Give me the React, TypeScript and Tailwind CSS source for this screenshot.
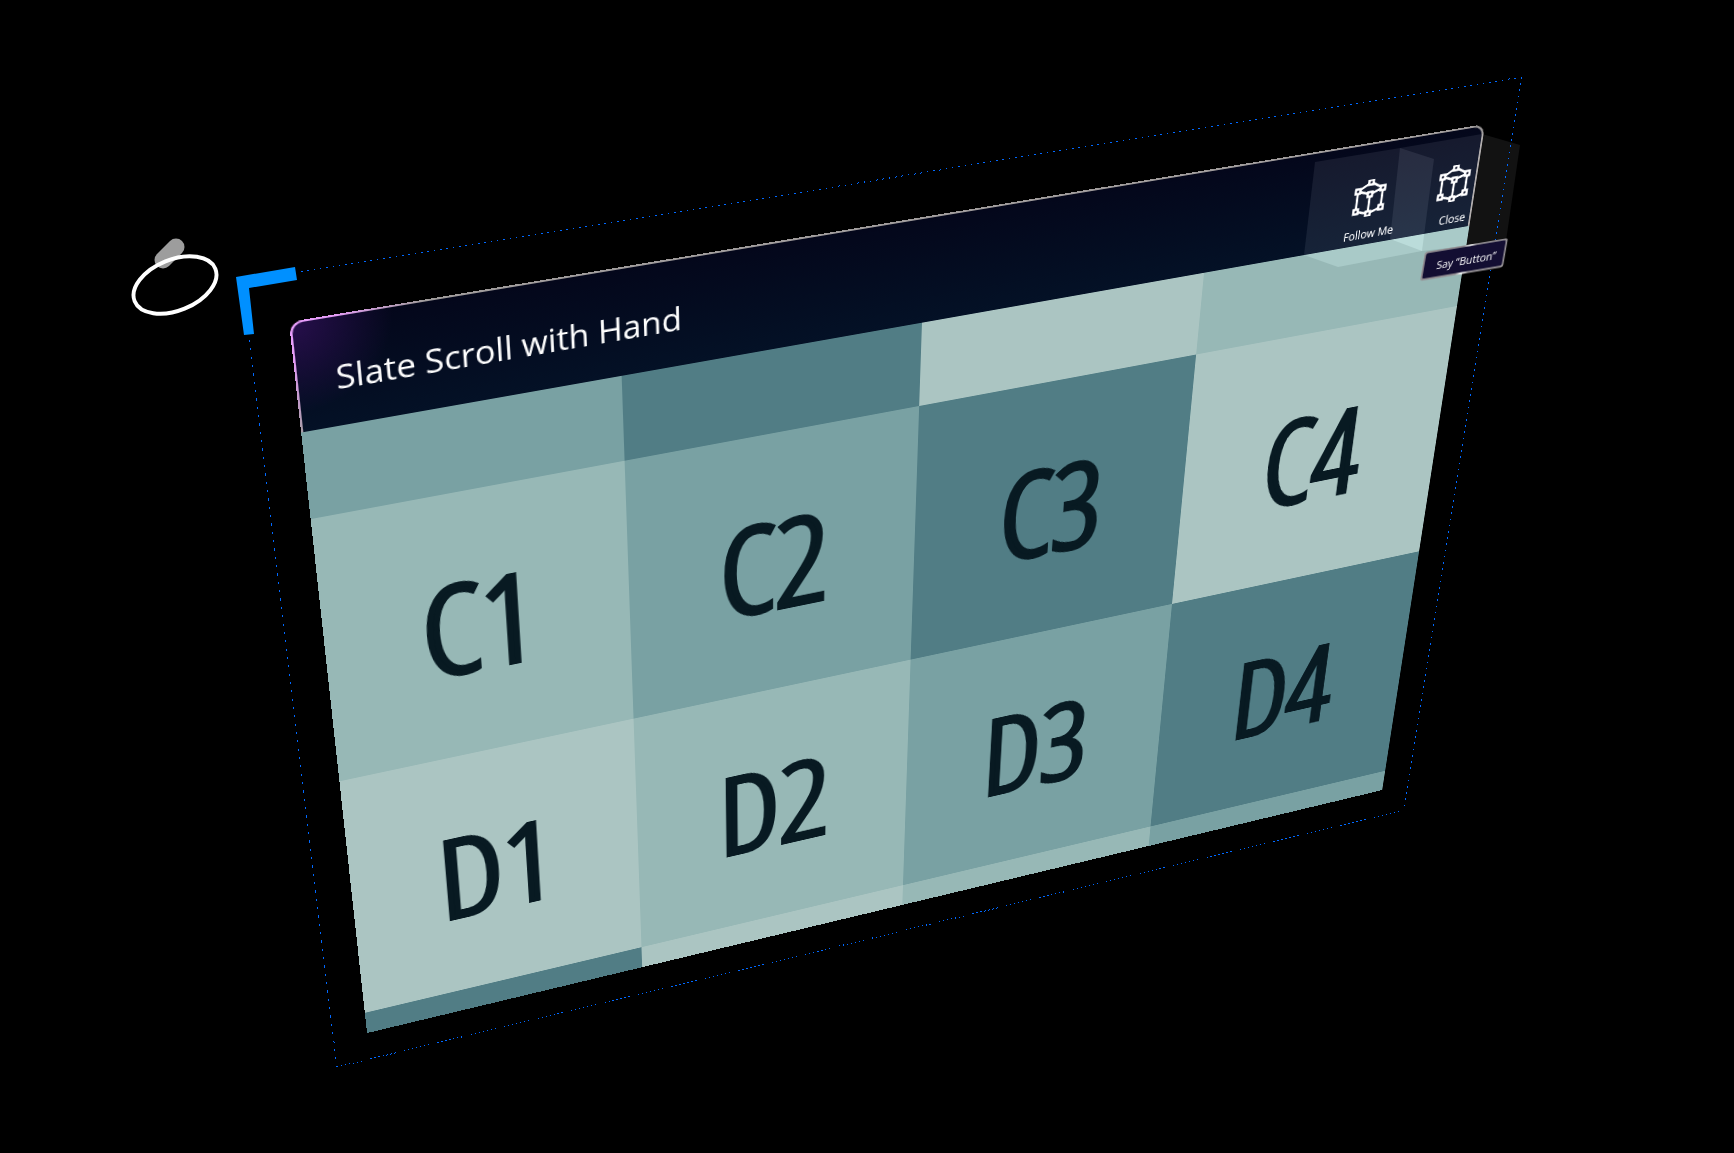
import { useEffect, useState, type ReactNode } from "react";

type Point = [number, number];
type Quad = [Point, Point, Point, Point];

const SCENE_WIDTH = 1734;

/* Corners run clockwise from the top left, in scene units. */
const SLATE: Quad = [[289, 322], [1485, 124], [1382, 790], [367, 1033]];
const TOOLTIP: Quad = [[1425, 252], [1508, 238], [1503, 267], [1420, 281]];

/* Projective transform that carries a w × h box onto a quad. */
function project(quad: Quad, w: number, h: number, scale: number) {
  const [p0, p1, p2, p3] = quad.map(([x, y]) => [x * scale, y * scale]);
  const dx1 = p1[0] - p2[0];
  const dx2 = p3[0] - p2[0];
  const sx = p0[0] - p1[0] + p2[0] - p3[0];
  const dy1 = p1[1] - p2[1];
  const dy2 = p3[1] - p2[1];
  const sy = p0[1] - p1[1] + p2[1] - p3[1];
  const den = dx1 * dy2 - dx2 * dy1;
  const g = (sx * dy2 - dx2 * sy) / den;
  const k = (dx1 * sy - sx * dy1) / den;
  const a = p1[0] - p0[0] + g * p1[0];
  const b = p3[0] - p0[0] + k * p3[0];
  const d = p1[1] - p0[1] + g * p1[1];
  const e = p3[1] - p0[1] + k * p3[1];
  return `matrix3d(${a / w},${d / w},0,${g / w},${b / h},${e / h},0,${k / h},0,0,1,0,${p0[0]},${p0[1]},0,1)`;
}

function useSceneScale() {
  const [scale, setScale] = useState(window.innerWidth / SCENE_WIDTH);
  useEffect(() => {
    const onResize = () => setScale(window.innerWidth / SCENE_WIDTH);
    window.addEventListener("resize", onResize);
    return () => window.removeEventListener("resize", onResize);
  }, []);
  return scale;
}

const LIGHT = "bg-[#abc5c2]";
const SOFT = "bg-[#97b8b6]";
const MID = "bg-[#79a1a3]";
const DARK = "bg-[#517d85]";

/* Visible part of the scrolled map: rows B (cut off), C, D and E (cut off). */
const CELLS: { tone: string; label?: string }[] = [
  { tone: MID }, { tone: DARK }, { tone: LIGHT }, { tone: SOFT },
  { tone: SOFT, label: "C1" }, { tone: MID, label: "C2" }, { tone: DARK, label: "C3" }, { tone: LIGHT, label: "C4" },
  { tone: LIGHT, label: "D1" }, { tone: SOFT, label: "D2" }, { tone: MID, label: "D3" }, { tone: DARK, label: "D4" },
  { tone: DARK }, { tone: LIGHT }, { tone: SOFT }, { tone: MID },
];

const NODES: Point[] = [[0, -17], [-14, -9], [14, -9], [0, -4], [-14, 13], [14, 12], [0, 17]];

function BoundsIcon() {
  return (
    <svg viewBox="-20 -20 40 40" className="size-10" fill="none" stroke="#fff" strokeWidth="2.4" aria-hidden="true">
      <path d="M0-17L-14-9V13L0 17L14 12V-9ZM-14-9L0-4L14-9M0-4V17" />
      {NODES.map(([x, y]) => (
        <rect key={`${x},${y}`} x={x - 2.5} y={y - 2.5} width="5" height="5" fill="#171a2d" />
      ))}
    </svg>
  );
}

function HeaderButton({ children }: { children: ReactNode }) {
  return (
    <button type="button" className="flex w-24 flex-col items-center gap-3 text-xs leading-4 text-white">
      <BoundsIcon />
      <span className="pl-2">{children}</span>
    </button>
  );
}

function Slate({ scale }: { scale: number }) {
  return (
    <section
      aria-labelledby="slate-title"
      className="absolute top-0 left-0 flex h-[830px] w-[1200px] origin-top-left flex-col"
      style={{ transform: project(SLATE, 1200, 830, scale) }}
    >
      <header className="h-[111px] shrink-0 rounded-t-xl bg-[radial-gradient(circle_at_0_0,#eba0ff_0,#e39cf5_40px,#a09c9c_120px)] px-[2px] pt-[2px]">
        <div className="flex h-full justify-between rounded-t-[10px] bg-[radial-gradient(circle_at_0_0,#270f4c_0,#270f4c00_90px),linear-gradient(#04071b,#041126)]">
          <h1 id="slate-title" className="pt-9 pl-[34px] text-[32px] leading-12 text-white">
            Slate Scroll with Hand
          </h1>
          <div className="-mr-6 flex pt-[38px]">
            <HeaderButton>Follow Me</HeaderButton>
            <HeaderButton>Close</HeaderButton>
          </div>
        </div>
      </header>
      <div className="grid flex-1 grid-cols-4 grid-rows-[91fr_300fr_300fr_28fr] overflow-hidden">
        {CELLS.map((cell, i) => (
          <div
            key={i}
            className={`flex items-center justify-center pb-1 font-['Open_Sans_Condensed_Light','Roboto_Condensed',sans-serif] text-[138px] leading-none text-[#081a22] [-webkit-text-stroke:6px_#081a22] ${cell.tone}`}
          >
            {cell.label}
          </div>
        ))}
      </div>
    </section>
  );
}

/* Additive glass plates behind and in front of the two header buttons. */
function ButtonPlates() {
  return (
    <svg viewBox="0 0 1734 1153" className="pointer-events-none absolute top-0 left-0 w-full" aria-hidden="true">
      <path className="mix-blend-plus-lighter" fill="#121212" d="M1315 162L1400 148L1434 159L1422 251L1338 267L1304 255Z" />
      <path className="mix-blend-plus-lighter" fill="#121212" d="M1400 148L1482 134L1520 145L1506 241L1422 251L1390 239Z" />
    </svg>
  );
}

function BoundingFrame() {
  return (
    <svg viewBox="0 0 1734 1153" className="pointer-events-none absolute top-0 left-0 w-full" fill="none" aria-hidden="true">
      <g stroke="#0068ff" strokeWidth="1" shapeRendering="crispEdges">
        <path d="M301 272L1522 77" strokeDasharray="1.6 4.8" />
        <path d="M249 340L337 1067" strokeDasharray="2.2 6.2" />
        <path d="M1522 77L1404 810" strokeDasharray="1.6 4.7" />
        <path d="M337 1067L1404 810" strokeDasharray="1.3 2.8 1.3 2.8 1.3 2.8 1.3 2.8 1.3 2.8 1.3 2.8 1.3 8.5" />
      </g>
      <path d="M236 277L295 267L297 280L249 288L254 334L244 335Z" fill="#0090ff" />
    </svg>
  );
}

function HandCursor() {
  return (
    <svg viewBox="0 0 1734 1153" className="pointer-events-none absolute top-0 left-0 w-full" fill="none" aria-hidden="true">
      <path d="M176 247L163 260" stroke="#9d9d9d" strokeWidth="17" strokeLinecap="round" />
      <ellipse cx="175" cy="285" rx="43.5" ry="25.5" transform="rotate(-22 175 285)" stroke="#fff" strokeWidth="3.9" />
    </svg>
  );
}

function VoiceTooltip({ scale }: { scale: number }) {
  return (
    <div
      role="tooltip"
      className="absolute top-0 left-0 h-8 w-24 origin-top-left rounded-[3px] bg-[linear-gradient(100deg,#938f93_45%,#fff_52%,#938f93_60%)] p-[2px]"
      style={{ transform: project(TOOLTIP, 96, 32, scale) }}
    >
      <p className="flex h-full items-center justify-center rounded-[2px] bg-[#130e32] pt-1 pl-1.5 text-xs leading-4 whitespace-nowrap text-white">
        Say “Button”
      </p>
    </div>
  );
}

export default function App() {
  const scale = useSceneScale();
  return (
    <main className="relative isolate min-h-screen overflow-hidden bg-black font-['Open_Sans','Noto_Sans',sans-serif]">
      <Slate scale={scale} />
      <ButtonPlates />
      <BoundingFrame />
      <HandCursor />
      <VoiceTooltip scale={scale} />
    </main>
  );
}
